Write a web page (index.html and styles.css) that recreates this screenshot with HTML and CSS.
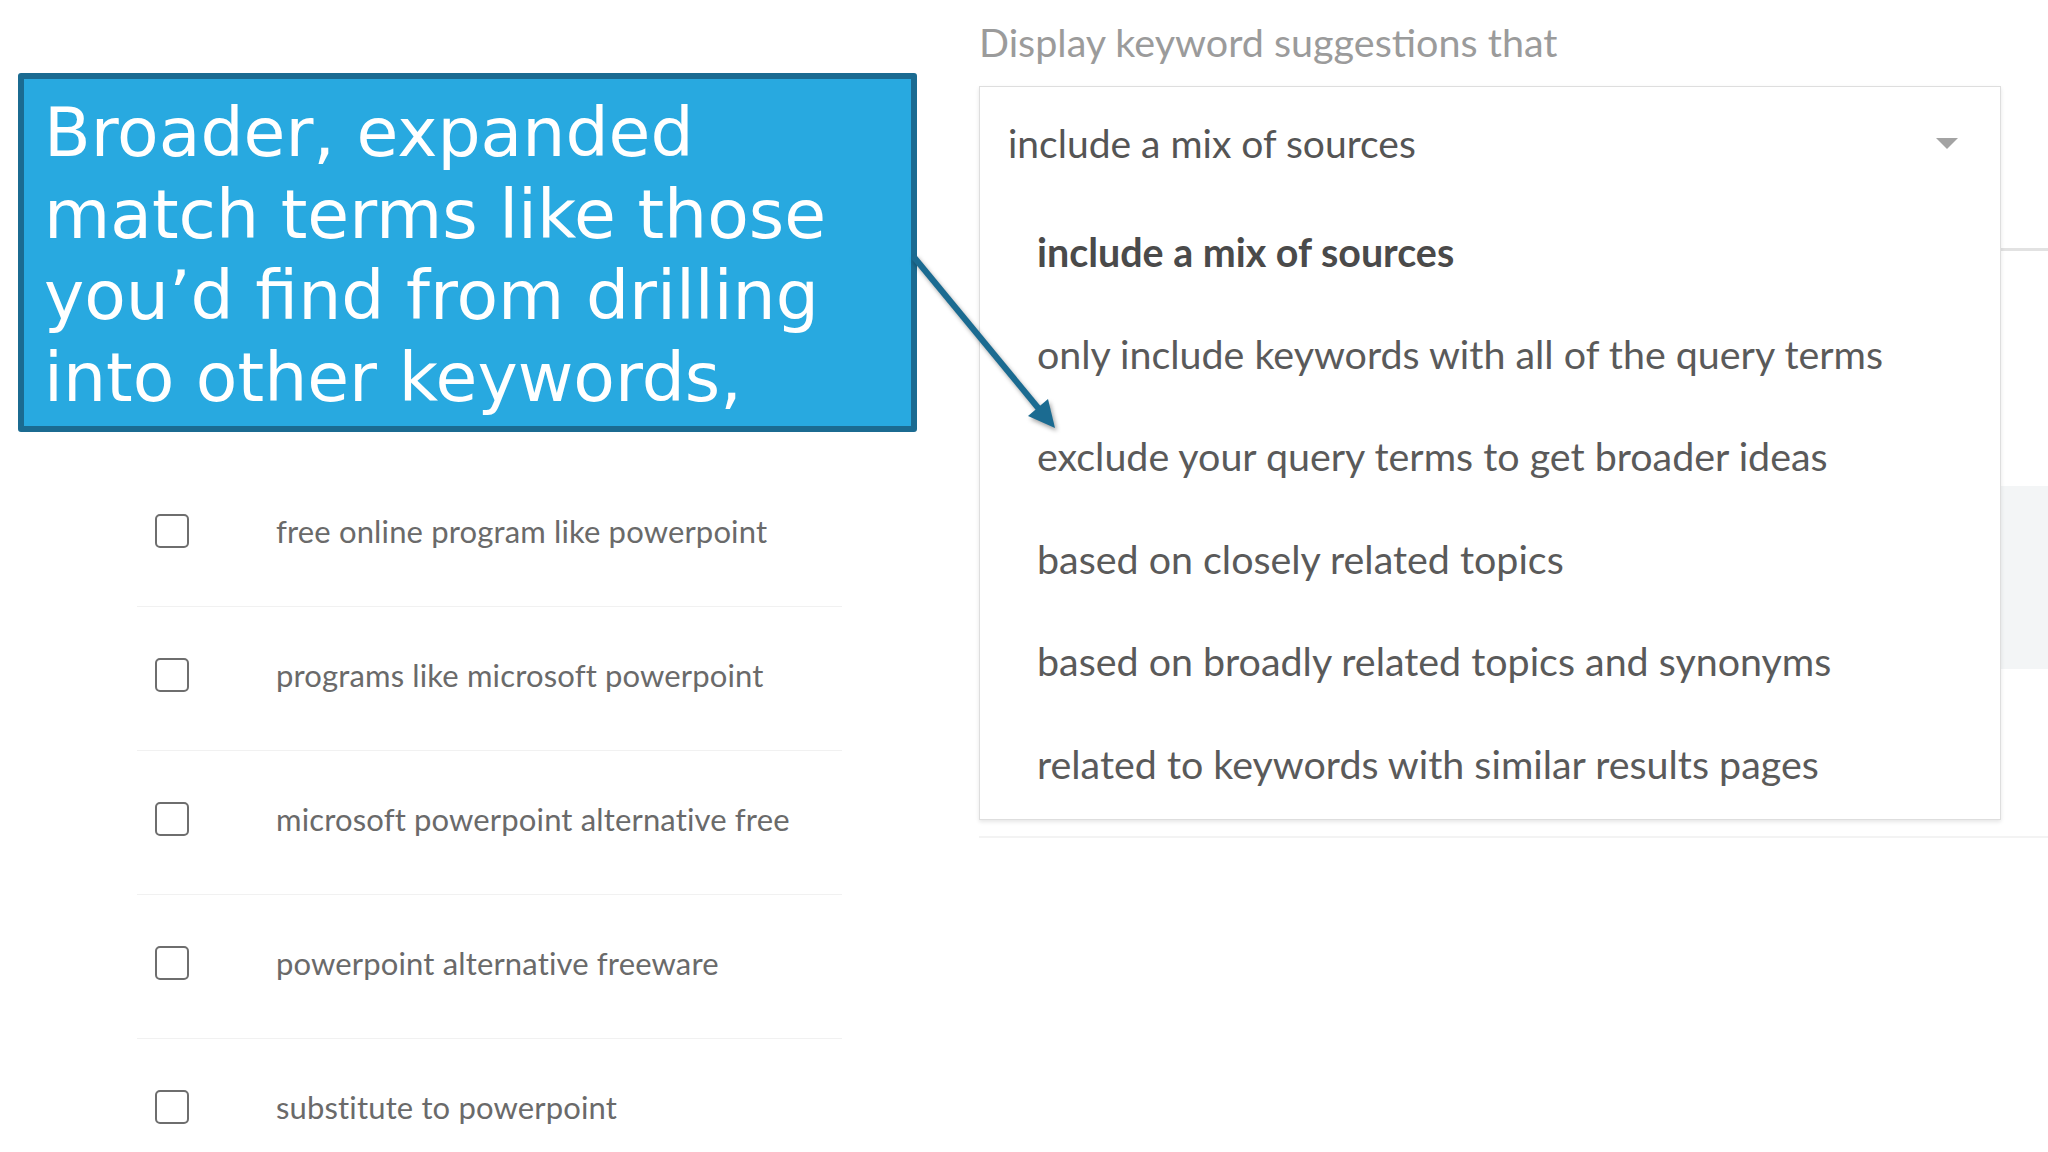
FILE: index.html
```html
<!DOCTYPE html>
<html lang="en">
<head>
<meta charset="utf-8">
<title>Keyword suggestions</title>
<link rel="stylesheet" href="styles.css">
</head>
<body>
<div class="page">
  <section class="left">
    <ul class="kw-list">
      <li class="kw-row"><span class="check"></span><span class="kw">free online program like powerpoint</span></li>
      <li class="kw-row"><span class="check"></span><span class="kw">programs like microsoft powerpoint</span></li>
      <li class="kw-row"><span class="check"></span><span class="kw">microsoft powerpoint alternative free</span></li>
      <li class="kw-row"><span class="check"></span><span class="kw">powerpoint alternative freeware</span></li>
      <li class="kw-row"><span class="check"></span><span class="kw">substitute to powerpoint</span></li>
    </ul>
  </section>
  <section class="right">
    <div class="label">Display keyword suggestions that</div>
    <div class="under">
      <div class="rule"></div>
      <div class="panel"></div>
      <div class="rule2"></div>
    </div>
    <div class="menu">
      <div class="menu-head">
        <span class="menu-value">include a mix of sources</span>
        <span class="caret"></span>
      </div>
      <ul class="menu-list">
        <li class="opt opt-active">include a mix of sources</li>
        <li class="opt">only include keywords with all of the query terms</li>
        <li class="opt">exclude your query terms to get broader ideas</li>
        <li class="opt">based on closely related topics</li>
        <li class="opt">based on broadly related topics and synonyms</li>
        <li class="opt">related to keywords with similar results pages</li>
      </ul>
    </div>
  </section>
</div>

<div class="callout">Broader, expanded<br>match terms like those<br>you’d find from drilling<br>into other keywords,</div>

<svg class="arrow" width="2048" height="1152" viewBox="0 0 2048 1152">
  <g class="arrow-g">
    <line x1="913" y1="256" x2="1039" y2="409" stroke="#1b6b91" stroke-width="6"/>
    <polygon points="1055,428 1028,416 1048,399" fill="#1b6b91"/>
  </g>
</svg>
</body>
</html>
```

FILE: styles.css
```css
html, body {
  margin: 0;
  padding: 0;
  background: #ffffff;
  width: 2048px;
  height: 1152px;
  overflow: hidden;
  font-family: "Lato", "Liberation Sans", sans-serif;
}

.page {
  display: flex;
  width: 2048px;
  height: 1152px;
}

.left {
  width: 979px;
  flex: none;
  padding: 463px 0 0 137px;
  box-sizing: border-box;
}

.kw-list {
  list-style: none;
  margin: 0;
  padding: 0;
  width: 705px;
}

.kw-row {
  display: flex;
  align-items: center;
  height: 144px;
  box-sizing: border-box;
  padding: 0 0 8px 18px;
  border-bottom: 1px solid #f1f1f1;
}

.kw-row:last-child {
  border-bottom: none;
}

.check {
  width: 34px;
  height: 34px;
  box-sizing: border-box;
  border: 2.5px solid #6e6e6e;
  border-radius: 5px;
  flex: none;
}

.kw {
  margin-left: 87px;
  font-size: 31px;
  letter-spacing: 0.15px;
  color: #6a6a6a;
}

.right {
  flex: 1;
  position: relative;
  padding-top: 19px;
}

.label {
  font-size: 39.5px;
  line-height: 46px;
  color: #9b9b9b;
}

.under .rule {
  margin-top: 183px;
  height: 3px;
  background: #e2e2e2;
}

.under .panel {
  margin-top: 235px;
  height: 183px;
  background: #f3f5f6;
}

.under .rule2 {
  margin-top: 167px;
  height: 2px;
  background: #f3f3f3;
}

.menu {
  position: absolute;
  left: 0;
  top: 86px;
  width: 1022px;
  box-sizing: border-box;
  background: #ffffff;
  border: 1.5px solid #dedede;
  box-shadow: 0 2px 4px rgba(0, 0, 0, 0.10);
}

.menu-head {
  display: flex;
  align-items: center;
  justify-content: space-between;
  height: 116px;
  padding: 0 42px 4px 28px;
  box-sizing: border-box;
}

.menu-value {
  font-size: 39px;
  color: #555555;
}

.caret {
  width: 0;
  height: 0;
  border-left: 11px solid transparent;
  border-right: 11px solid transparent;
  border-top: 11px solid #a3a3a3;
}

.menu-list {
  list-style: none;
  margin: 0;
  padding: 0 0 2px 0;
}

.opt {
  display: flex;
  align-items: center;
  height: 102.4px;
  padding: 0 0 6px 57px;
  box-sizing: border-box;
  font-size: 39.4px;
  color: #5a5a5a;
}

.opt-active {
  font-weight: 700;
  color: #4a4a4a;
}

.callout {
  position: absolute;
  left: 18px;
  top: 73px;
  width: 899px;
  height: 359px;
  box-sizing: border-box;
  background: #28a9e0;
  border: 6px solid #1b6b91;
  border-radius: 3px;
  padding: 13px 20px 0 20px;
  font-family: "DejaVu Sans", "Verdana", sans-serif;
  font-size: 68px;
  line-height: 81.6px;
  color: #ffffff;
}

.arrow {
  position: absolute;
  left: 0;
  top: 0;
  pointer-events: none;
}

.arrow-g {
  filter: drop-shadow(2px 3px 2px rgba(0, 0, 0, 0.35));
}
```
